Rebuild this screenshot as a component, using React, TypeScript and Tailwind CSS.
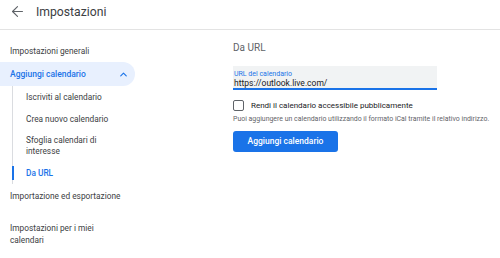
import React from 'react';
import { ArrowLeft, ChevronUp } from 'lucide-react';

const font = { fontFamily: 'Roboto, "Liberation Sans", sans-serif' };

export default function App() {
  return (
    <div className="w-[500px] h-[258px] overflow-hidden bg-white text-[#3c4043]" style={font}>
      {/* Header */}
      <div className="flex h-[30px] items-start border-b border-[#e3e3e3] pl-[9px] pt-[3px]">
        <ArrowLeft size={17} strokeWidth={1.6} className="text-[#5f6368]" />
        <span className="ml-[10px] text-[12.2px] leading-[18px]">Impostazioni</span>
      </div>

      <div className="flex">
        {/* Sidebar */}
        <div className="w-[220px] shrink-0 pt-[10px]">
          <div className="flex h-[22px] items-center pl-[10px] text-[8.3px]">Impostazioni generali</div>
          <div className="flex h-[24px] w-[135px] items-center justify-between rounded-r-full bg-[#e8f0fe] pl-[10px] pr-[6px] text-[8.5px] font-medium text-[#1a73e8]">
            <span>Aggiungi calendario</span>
            <ChevronUp size={11} strokeWidth={2.5} />
          </div>
          <div className="ml-[12px] flex flex-col border-l border-[#dadce0] text-[8.3px]">
            <div className="flex h-[22px] items-center pl-[13px]">Iscriviti al calendario</div>
            <div className="flex h-[22px] items-center pl-[13px]">Crea nuovo calendario</div>
            <div className="flex h-[32px] items-center pl-[13px] leading-[11px]">
              Sfoglia calendari di
              <br />
              interesse
            </div>
            <div className="relative flex h-[22px] items-center pl-[13px] font-medium text-[#1a73e8]">
              <span className="absolute left-[-1.5px] top-[4px] h-[14px] w-[2px] bg-[#1a73e8]" />
              Da URL
            </div>
          </div>
          <div className="flex h-[24px] items-center pl-[10px] text-[8.3px]">Importazione ed esportazione</div>
          <div className="mt-[14px] pl-[10px] text-[8.3px] leading-[12px]">
            Impostazioni per i miei
            <br />
            calendari
          </div>
        </div>

        {/* Main */}
        <div className="flex-1 pl-[13px] pt-[12px]">
          <div className="text-[10px] leading-[12px] text-[#5f6368]">Da URL</div>
          <div className="mt-[12px] h-[24px] w-[204px] border-b-2 border-[#1a73e8] bg-[#f1f3f4] pl-[1px] pt-[5px]">
            <div className="text-[7px] leading-[7px] text-[#1a73e8]">URL del calendario</div>
            <div className="text-[8.5px] leading-[10px] text-[#202124]">https://outlook.live.com/</div>
          </div>
          <div className="mt-[10px] flex items-center">
            <div className="h-[11px] w-[11px] rounded-[2px] border-[1.5px] border-[#5f6368]" />
            <span className="ml-[7px] text-[8px] leading-[11px] text-[#202124]">
              Rendi il calendario accessibile pubblicamente
            </span>
          </div>
          <div className="mt-[4px] whitespace-nowrap text-[6.95px] leading-[8px] text-[#5f6368]">
            Puoi aggiungere un calendario utilizzando il formato iCal tramite il relativo indirizzo.
          </div>
          <button className="mt-[8px] flex h-[21px] w-[105px] items-center justify-center rounded-[3px] bg-[#1a73e8] text-[8.5px] font-medium text-white">
            Aggiungi calendario
          </button>
        </div>
      </div>
    </div>
  );
}
